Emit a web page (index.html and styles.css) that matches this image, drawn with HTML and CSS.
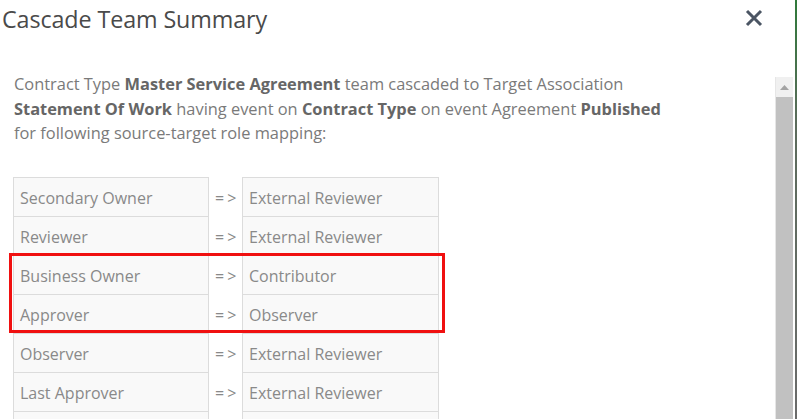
FILE: index.html
```html
<!DOCTYPE html>
<html lang="en">
<head>
    <meta charset="UTF-8">
    <meta name="viewport" content="width=device-width, initial-scale=1.0">
    <title>Cascade Team Summary</title>
    <link rel="stylesheet" href="styles.css">
</head>
<body>

<div class="dialog">
    <div class="dialog-header">
        <h2>Cascade Team Summary</h2>
        <button class="close" type="button" aria-label="Close">
            <svg width="18" height="18" viewBox="0 0 18 18">
                <path d="M2 2 L16 16 M16 2 L2 16" stroke="#4b5563" stroke-width="3" stroke-linecap="butt"/>
            </svg>
        </button>
    </div>

    <div class="dialog-body">
        <div class="content">
            <p class="summary">
                Contract Type <b>Master Service Agreement</b> team cascaded to Target Association<br>
                <b>Statement Of Work</b> having event on <b>Contract Type</b> on event Agreement <b>Published</b><br>
                for following source-target role mapping:
            </p>

            <div class="mapping-wrap">
                <table class="mapping">
                    <tr><td class="role">Secondary Owner</td><td class="arrow">=&gt;</td><td class="role">External Reviewer</td></tr>
                    <tr><td class="role">Reviewer</td><td class="arrow">=&gt;</td><td class="role">External Reviewer</td></tr>
                    <tr><td class="role">Business Owner</td><td class="arrow">=&gt;</td><td class="role">Contributor</td></tr>
                    <tr><td class="role">Approver</td><td class="arrow">=&gt;</td><td class="role">Observer</td></tr>
                    <tr><td class="role">Observer</td><td class="arrow">=&gt;</td><td class="role">External Reviewer</td></tr>
                    <tr><td class="role">Last Approver</td><td class="arrow">=&gt;</td><td class="role">External Reviewer</td></tr>
                    <tr><td class="role"></td><td class="arrow"></td><td class="role"></td></tr>
                </table>
                <div class="highlight"></div>
            </div>
        </div>

        <div class="scrollbar">
            <div class="scroll-up">
                <svg width="9" height="5" viewBox="0 0 9 5"><path d="M0 5 L4.5 0 L9 5 Z" fill="#a3a3a3"/></svg>
            </div>
            <div class="scroll-thumb"></div>
        </div>
        <div class="window-edge"></div>
    </div>
</div>

</body>
</html>
```

FILE: styles.css
```css
html, body {
    margin: 0;
    height: 100%;
    overflow: hidden;
}
body {
    font-family: "Open Sans", "Noto Sans", Arial, sans-serif;
    background-color: #fff;
    color: #7a7a7a;
}
.dialog {
    display: flex;
    flex-direction: column;
    height: 419px;
}
.dialog-header {
    display: flex;
    align-items: flex-start;
    justify-content: space-between;
    height: 70px;
    padding: 0 37px 0 2px;
}
.dialog-header h2 {
    margin: 3px 0 0;
    font-size: 23.3px;
    font-weight: 400;
    color: #4a4a4a;
    letter-spacing: -0.1px;
}
.close {
    border: none;
    background: none;
    padding: 0;
    margin-top: 9px;
    cursor: pointer;
}
.dialog-body {
    display: flex;
    flex: 1;
    min-height: 0;
}
.content {
    flex: 1;
    padding-left: 14px;
}
.summary {
    margin: 2px 0 0;
    font-size: 16.4px;
    line-height: 24.5px;
    white-space: nowrap;
}
.summary b {
    font-weight: 700;
    color: #666;
}
.mapping-wrap {
    position: relative;
    margin-top: 31px;
    margin-left: -1px;
    width: 426px;
}
.mapping {
    border-collapse: collapse;
    font-size: 16px;
}
.mapping td {
    height: 39px;
    padding: 3px 0 0 6px;
    box-sizing: border-box;
    vertical-align: middle;
    color: #898989;
    white-space: nowrap;
}
.mapping .role {
    border: 1px solid #dcdcdc;
    background-color: #f9f9f9;
}
.mapping tr td.role:first-child {
    width: 195px;
}
.mapping tr td.role:last-child {
    width: 196px;
}
.mapping .arrow {
    width: 34px;
    letter-spacing: 3px;
}
.highlight {
    position: absolute;
    left: -4px;
    top: 76px;
    width: 430px;
    height: 74px;
    border: 3px solid #f01010;
}
.scrollbar {
    width: 17px;
    margin-top: 7px;
    display: flex;
    flex-direction: column;
    border-left: 1px solid #e6e6e6;
}
.scroll-up {
    height: 20px;
    background-color: #f0f0f0;
    display: flex;
    align-items: center;
    justify-content: center;
}
.scroll-thumb {
    flex: 1;
    background-color: #c1c1c1;
}
.window-edge {
    width: 2px;
    margin-left: 2px;
    margin-right: 3px;
    margin-top: -70px;
    background: linear-gradient(#2f7a3a 0, #5c6b5c 30%, #6b6b6b 100%);
}
```
